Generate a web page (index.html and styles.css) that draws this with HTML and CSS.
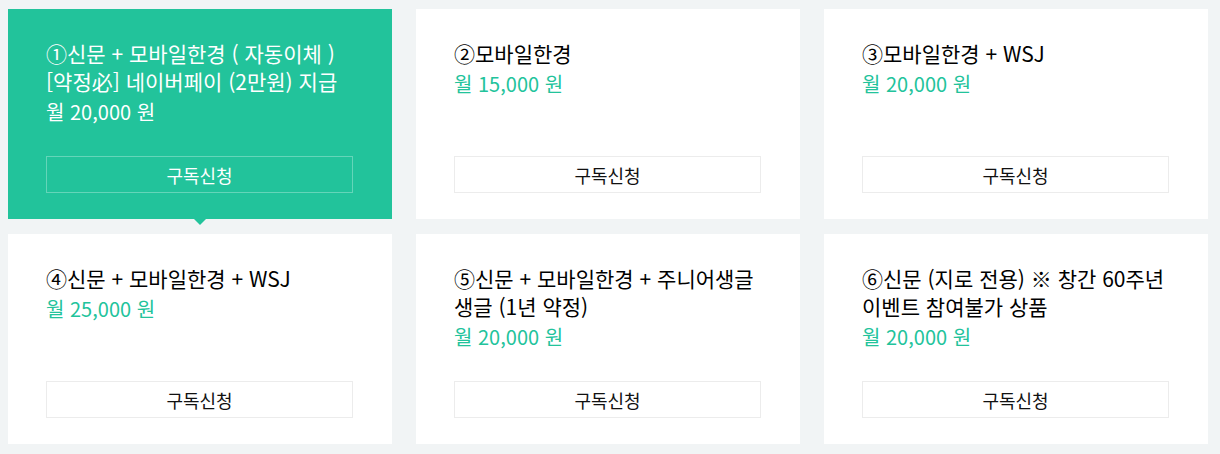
FILE: index.html
```html
<!DOCTYPE html>
<html lang="ko">
<head>
<meta charset="utf-8">
<link rel="stylesheet" href="styles.css">
</head>
<body>
<div class="grid">
  <div class="card active">
    <div class="title">①신문 + 모바일한경 ( 자동이체 )<br>[약정必] 네이버페이 (2만원) 지급</div>
    <div class="price">월 20,000 원</div>
    <a class="btn">구독신청</a>
  </div>
  <div class="card">
    <div class="title">②모바일한경</div>
    <div class="price">월 15,000 원</div>
    <a class="btn">구독신청</a>
  </div>
  <div class="card">
    <div class="title">③모바일한경 + WSJ</div>
    <div class="price">월 20,000 원</div>
    <a class="btn">구독신청</a>
  </div>
  <div class="card">
    <div class="title">④신문 + 모바일한경 + WSJ</div>
    <div class="price">월 25,000 원</div>
    <a class="btn">구독신청</a>
  </div>
  <div class="card">
    <div class="title">⑤신문 + 모바일한경 + 주니어생글<br>생글 (1년 약정)</div>
    <div class="price">월 20,000 원</div>
    <a class="btn">구독신청</a>
  </div>
  <div class="card">
    <div class="title">⑥신문 (지로 전용) ※ 창간 60주년<br>이벤트 참여불가 상품</div>
    <div class="price">월 20,000 원</div>
    <a class="btn">구독신청</a>
  </div>
</div>
</body>
</html>
```
FILE: styles.css
```css
html, body {
  margin: 0;
  padding: 0;
  background: #f1f4f5;
  font-family: "Noto Sans CJK KR", "Noto Sans", sans-serif;
}
.grid {
  display: grid;
  grid-template-columns: repeat(3, 384px);
  grid-auto-rows: 210px;
  column-gap: 24px;
  row-gap: 15px;
  padding: 9px 0 0 8px;
}
.card {
  position: relative;
  background: #fff;
  display: flex;
  flex-direction: column;
  padding: 30px 39px 26px 38px;
  box-sizing: border-box;
  color: #000;
}
.title {
  font-size: 21px;
  line-height: 28px;
  white-space: nowrap;
}
.price {
  font-size: 20px;
  line-height: 28px;
  margin-top: 3px;
  color: #22c39b;
}
.btn {
  margin-top: auto;
  height: 37px;
  box-sizing: border-box;
  border: 1px solid #ececec;
  display: flex;
  align-items: center;
  justify-content: center;
  font-size: 18px;
  color: #111;
}
.card.active {
  background: #22c39b;
  color: #fff;
}
.card.active .price { color: #fff; }
.card.active .btn {
  color: #fff;
  border-color: rgba(255,255,255,0.3);
}
.card.active::after {
  content: "";
  position: absolute;
  left: 186px;
  bottom: -6px;
  border-left: 6px solid transparent;
  border-right: 6px solid transparent;
  border-top: 6px solid #22c39b;
}
```
